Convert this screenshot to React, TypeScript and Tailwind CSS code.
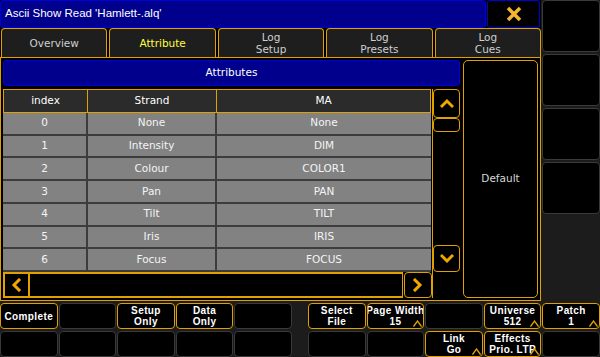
import React from "react";

function Chevron({ dir }: { dir: "up" | "down" | "left" | "right" }) {
  const pts: Record<string, string> = {
    up: "2,9 7,4 12,9",
    down: "2,4 7,9 12,4",
    left: "9,2 4,7 9,12",
    right: "4,2 9,7 4,12",
  };
  return (
    <svg width="14" height="14" viewBox="0 0 14 14">
      <polyline points={pts[dir]} fill="none" stroke="#f0a800" strokeWidth="3" strokeLinecap="square" />
    </svg>
  );
}

function Corner() {
  return (
    <svg className="absolute right-[1px] bottom-[1px]" width="9" height="7" viewBox="0 0 9 7">
      <polyline points="0.5,6.5 4.5,1 8.5,6.5" fill="none" stroke="#e0a000" strokeWidth="1.3" />
    </svg>
  );
}

function Btn({ l1, l2, on, corner }: { l1?: string; l2?: string; on?: boolean; corner?: boolean }) {
  return (
    <div
      className={`relative h-[26px] overflow-hidden flex flex-col items-center justify-center rounded-[4px] border bg-black text-white font-bold text-[10px] leading-[11px] tracking-[0.4px] whitespace-nowrap ${on ? "border-[#e0a000]" : "border-[#3a3a3a]"}`}
      style={{ fontFamily: '"Liberation Sans", sans-serif' }}
    >
      {l1 && <span>{l1}</span>}
      {l2 && <span>{l2}</span>}
      {corner && <Corner />}
    </div>
  );
}

const rows = [
  ["0", "None", "None"],
  ["1", "Intensity", "DIM"],
  ["2", "Colour", "COLOR1"],
  ["3", "Pan", "PAN"],
  ["4", "Tilt", "TILT"],
  ["5", "Iris", "IRIS"],
  ["6", "Focus", "FOCUS"],
];

export default function App() {
  const tabs = [
    { a: "Overview" },
    { a: "Attribute", sel: true },
    { a: "Log", b: "Setup" },
    { a: "Log", b: "Presets" },
    { a: "Log", b: "Cues" },
  ];
  return (
    <div
      className="w-[600px] h-[357px] bg-[#1c1c1c] overflow-hidden flex flex-col"
      style={{ fontFamily: '"DejaVu Sans", "Liberation Sans", sans-serif' }}
    >
      <div className="flex h-[301px] shrink-0">
        {/* left */}
        <div className="w-[541px] flex flex-col bg-black">
          <div className="flex h-[28px] gap-[1px] shrink-0">
            <div className="flex-1 bg-[#00008c] border border-[#0000d8] rounded-[3px] flex items-center pl-[4px] text-white text-[11.5px]" style={{ fontFamily: '"Liberation Sans", sans-serif' }}>
              Ascii Show Read 'Hamlett-.alq'
            </div>
            <div className="w-[53px] mr-[1px] bg-black border border-[#0000d8] rounded-[3px] flex items-center justify-center">
              <svg width="16" height="16" viewBox="0 0 16 16">
                <path d="M2,2 L14,14 M14,2 L2,14" stroke="#f5b530" strokeWidth="3.5" strokeLinecap="butt" />
              </svg>
            </div>
          </div>
          <div className="flex h-[29px] gap-[2px] bg-black shrink-0 pl-[1px]">
            {tabs.map((t, i) => (
              <div
                key={i}
                className={`flex-1 bg-[#1e1e1e] border border-b-0 border-[#e0a000] rounded-t-[4px] flex flex-col items-center justify-center text-[10.5px] leading-[12px] ${t.sel ? "text-[#ffff40]" : "text-[#cfcfcf]"}`}
              >
                <span>{t.a}</span>
                {t.b && <span>{t.b}</span>}
              </div>
            ))}
          </div>
          <div className="flex-1 min-h-0 border border-[#e0a000] bg-black flex p-[2px] gap-[3px]">
            <div className="w-[457px] flex flex-col">
              <div className="h-[26px] shrink-0 bg-[#00008c] border border-[#0000d8] rounded-[3px] flex items-center justify-center text-white text-[10.5px]">
                Attributes
              </div>
              <div className="h-[3px] shrink-0" />
              <div className="flex h-[183px] shrink-0">
                <div className="w-[428px] flex flex-col">
                  <div className="flex h-[24px] shrink-0 bg-[#2b2b2b] text-white text-[10.5px]">
                    <div className="w-[85px] border border-[#e0a000] flex items-center justify-center">index</div>
                    <div className="w-[129px] border border-l-0 border-[#e0a000] flex items-center justify-center">Strand</div>
                    <div className="flex-1 border border-l-0 border-[#e0a000] flex items-center justify-center">MA</div>
                  </div>
                  {rows.map((r, i) => (
                    <div key={i} className="flex flex-1 bg-[#828282] text-[#f4f4f4] text-[10.5px] border-b-2 border-[#3c3c3c]">
                      <div className="w-[85px] border-r-2 border-[#3c3c3c] flex items-center justify-center">{r[0]}</div>
                      <div className="w-[129px] border-r-2 border-[#3c3c3c] flex items-center justify-center">{r[1]}</div>
                      <div className="flex-1 flex items-center justify-center">{r[2]}</div>
                    </div>
                  ))}
                </div>
                <div className="flex-1 flex flex-col bg-black border-l border-[#e0a000] ml-[1px]">
                  <div className="h-[29px] border border-[#e0a000] rounded-[4px] flex items-center justify-center">
                    <Chevron dir="up" />
                  </div>
                  <div className="h-[14px] border border-[#e0a000] rounded-[4px]" />
                  <div className="flex-1" />
                  <div className="h-[27px] border border-[#e0a000] rounded-[4px] flex items-center justify-center">
                    <Chevron dir="down" />
                  </div>
                </div>
              </div>
              <div className="flex flex-1">
                <div className="w-[27px] border-2 border-[#e0a000] flex items-center justify-center">
                  <Chevron dir="left" />
                </div>
                <div className="w-[373px] border-y-2 border-r border-[#e0a000]" />
                <div className="w-[28px] ml-[1px] border border-[#e0a000] rounded-[4px] flex items-center justify-center">
                  <Chevron dir="right" />
                </div>
                <div className="flex-1 border-l border-[#e0a000]" />
              </div>
            </div>
            <div className="flex-1 border border-[#e0a000] rounded-[5px] bg-black flex items-center justify-center text-[#d8d8d8] text-[10.5px]">
              Default
            </div>
          </div>
        </div>
        {/* right column */}
        <div className="flex-1 flex flex-col gap-[2px] pl-[1px]">
          {[0, 1, 2, 3].map((i) => (
            <div key={i} className="h-[52px] bg-black border border-[#3a3a3a] rounded-[4px]" />
          ))}
        </div>
      </div>
      <div className="h-[2px] shrink-0" />
      <div className="flex h-[54px] shrink-0 justify-between">
        <div className="w-[292px] grid grid-cols-5 grid-rows-[26px_26px] gap-x-[1px] gap-y-[2px]">
          <Btn l1="Complete" on />
          <Btn />
          <Btn l1="Setup" l2="Only" on />
          <Btn l1="Data" l2="Only" on />
          <Btn />
          <Btn />
          <Btn />
          <Btn />
          <Btn />
          <Btn />
        </div>
        <div className="w-[292px] grid grid-cols-5 grid-rows-[26px_26px] gap-x-[1px] gap-y-[2px]">
          <Btn l1="Select" l2="File" on />
          <Btn l1="Page Width" l2="15" on corner />
          <Btn />
          <Btn l1="Universe" l2="512" on corner />
          <Btn l1="Patch" l2="1" on corner />
          <Btn />
          <Btn />
          <Btn l1="Link" l2="Go" on corner />
          <Btn l1="Effects" l2="Prio. LTP" on corner />
          <Btn />
        </div>
      </div>
    </div>
  );
}
